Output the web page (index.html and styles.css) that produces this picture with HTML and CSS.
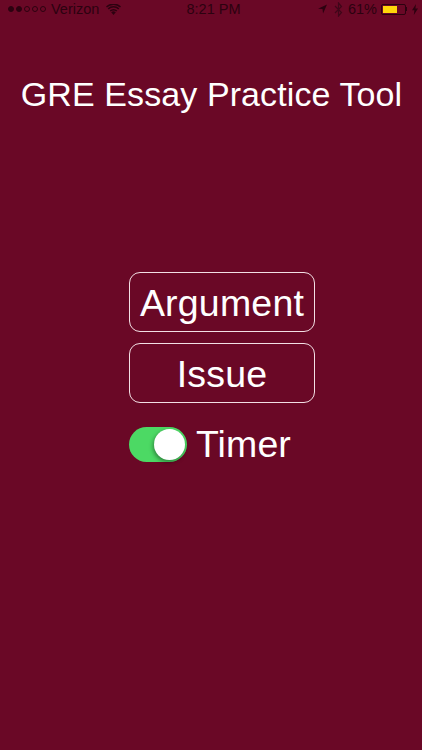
FILE: index.html
```html
<!DOCTYPE html>
<html lang="en">
<head>
    <meta charset="UTF-8">
    <meta name="viewport" content="width=device-width, initial-scale=1.0">
    <title>GRE Essay Practice Tool</title>
    <link rel="stylesheet" href="styles.css">
</head>
<body>
    <div class="status-bar">
        <div class="status-left">
            <span class="signal">
                <i class="dot full"></i><i class="dot full"></i><i class="dot"></i><i class="dot"></i><i class="dot"></i>
            </span>
            <span class="carrier">Verizon</span>
            <svg class="wifi" width="15" height="11" viewBox="0 0 15 11">
                <path d="M7.5 11 L5.2 8.2 A3.6 3.6 0 0 1 9.8 8.2 Z" fill="#2c0210"/>
                <path d="M3.7 6.6 A5.8 5.8 0 0 1 11.3 6.6 L10.4 7.6 A4.5 4.5 0 0 0 4.6 7.6 Z" fill="#2c0210"/>
                <path d="M1.7 4.3 A8.8 8.8 0 0 1 13.3 4.3 L12.3 5.4 A7.3 7.3 0 0 0 2.7 5.4 Z" fill="#2c0210"/>
                <path d="M0 2.4 A11 11 0 0 1 15 2.4 L14 3.5 A9.7 9.7 0 0 0 1 3.5 Z" fill="#2c0210"/>
            </svg>
        </div>
        <div class="status-time">8:21 PM</div>
        <div class="status-right">
            <svg class="arrow" width="9" height="10" viewBox="0 0 10 10">
                <path d="M10 0 L0 4.6 L5 5 L5.6 10 Z" fill="#2c0210"/>
            </svg>
            <svg class="bluetooth" width="9" height="15" viewBox="0 0 9 15">
                <path d="M1 4 L7.5 10.5 L4.5 14 V1 L7.5 4.5 L1 11" fill="none" stroke="#3f0619" stroke-width="1.2"/>
            </svg>
            <span class="percent">61%</span>
            <span class="battery"><span class="battery-level"></span></span>
            <span class="battery-tip"></span>
            <svg class="bolt" width="6" height="11" viewBox="0 0 6 11">
                <path d="M4 0 L0 6.2 H2.4 L1.8 11 L6 4.4 H3.4 Z" fill="#2c0210"/>
            </svg>
        </div>
    </div>

    <h1 class="title">GRE Essay Practice Tool</h1>

    <div class="menu">
        <button class="menu-button">Argument</button>
        <button class="menu-button">Issue</button>
        <div class="timer-row">
            <span class="switch"><span class="knob"></span></span>
            <span class="timer-label">Timer</span>
        </div>
    </div>
</body>
</html>
```

FILE: styles.css
```css
body {
    font-family: "Liberation Sans", Arial, sans-serif;
    margin: 0;
    padding: 0;
    height: 750px;
    overflow: hidden;
    background-color: #6a0826;
    color: #fff;
}

.status-bar {
    display: flex;
    justify-content: space-between;
    align-items: center;
    height: 16px;
    padding: 1px 4px 1px 8px;
    position: relative;
    color: #2c0210;
    font-size: 14.5px;
}

.status-left,
.status-right {
    display: flex;
    align-items: center;
}

.signal {
    display: flex;
    gap: 2px;
    margin-right: 5px;
}

.dot {
    width: 6px;
    height: 6px;
    border: 1px solid #2c0210;
    border-radius: 50%;
    box-sizing: border-box;
}

.dot.full {
    background-color: #2c0210;
}

.carrier {
    margin-right: 7px;
}

.status-time {
    position: absolute;
    left: 5px;
    right: 0;
    text-align: center;
}

.arrow {
    margin-right: 7px;
}

.bluetooth {
    margin-right: 5px;
}

.percent {
    margin-right: 4px;
}

.battery {
    display: block;
    width: 25px;
    height: 11px;
    border: 1px solid #2c0210;
    border-radius: 2px;
    padding: 1px;
    box-sizing: border-box;
}

.battery-level {
    display: block;
    width: 14px;
    height: 7px;
    background-color: #ffd60a;
}

.battery-tip {
    width: 1px;
    height: 4px;
    margin-right: 5px;
    background-color: #2c0210;
}

.title {
    margin: 56px 0 0;
    padding-left: 1px;
    font-size: 34px;
    font-weight: normal;
    line-height: 40px;
    text-align: center;
    white-space: nowrap;
    letter-spacing: 0.1px;
}

.menu {
    width: 186px;
    margin: 158px 0 0 129px;
    display: flex;
    flex-direction: column;
    gap: 11px;
}

.menu-button {
    height: 60px;
    padding: 2px 0 0;
    background: none;
    border: 1px solid #f3dfe4;
    border-radius: 11px;
    color: #fff;
    font-family: inherit;
    font-size: 37.5px;
    letter-spacing: 0.2px;
}

.timer-row {
    display: flex;
    align-items: center;
    gap: 9px;
    margin-top: 9px;
}

.switch {
    display: flex;
    justify-content: flex-end;
    align-items: center;
    width: 58px;
    height: 35px;
    padding: 2px;
    box-sizing: border-box;
    border-radius: 18px;
    background-color: #4cd964;
}

.knob {
    display: block;
    width: 31px;
    height: 31px;
    border-radius: 50%;
    background-color: #fff;
    box-shadow: -1px 2px 4px rgba(0, 0, 0, 0.4);
}

.timer-label {
    font-size: 37.5px;
    letter-spacing: 0.1px;
    line-height: 42px;
}
```
